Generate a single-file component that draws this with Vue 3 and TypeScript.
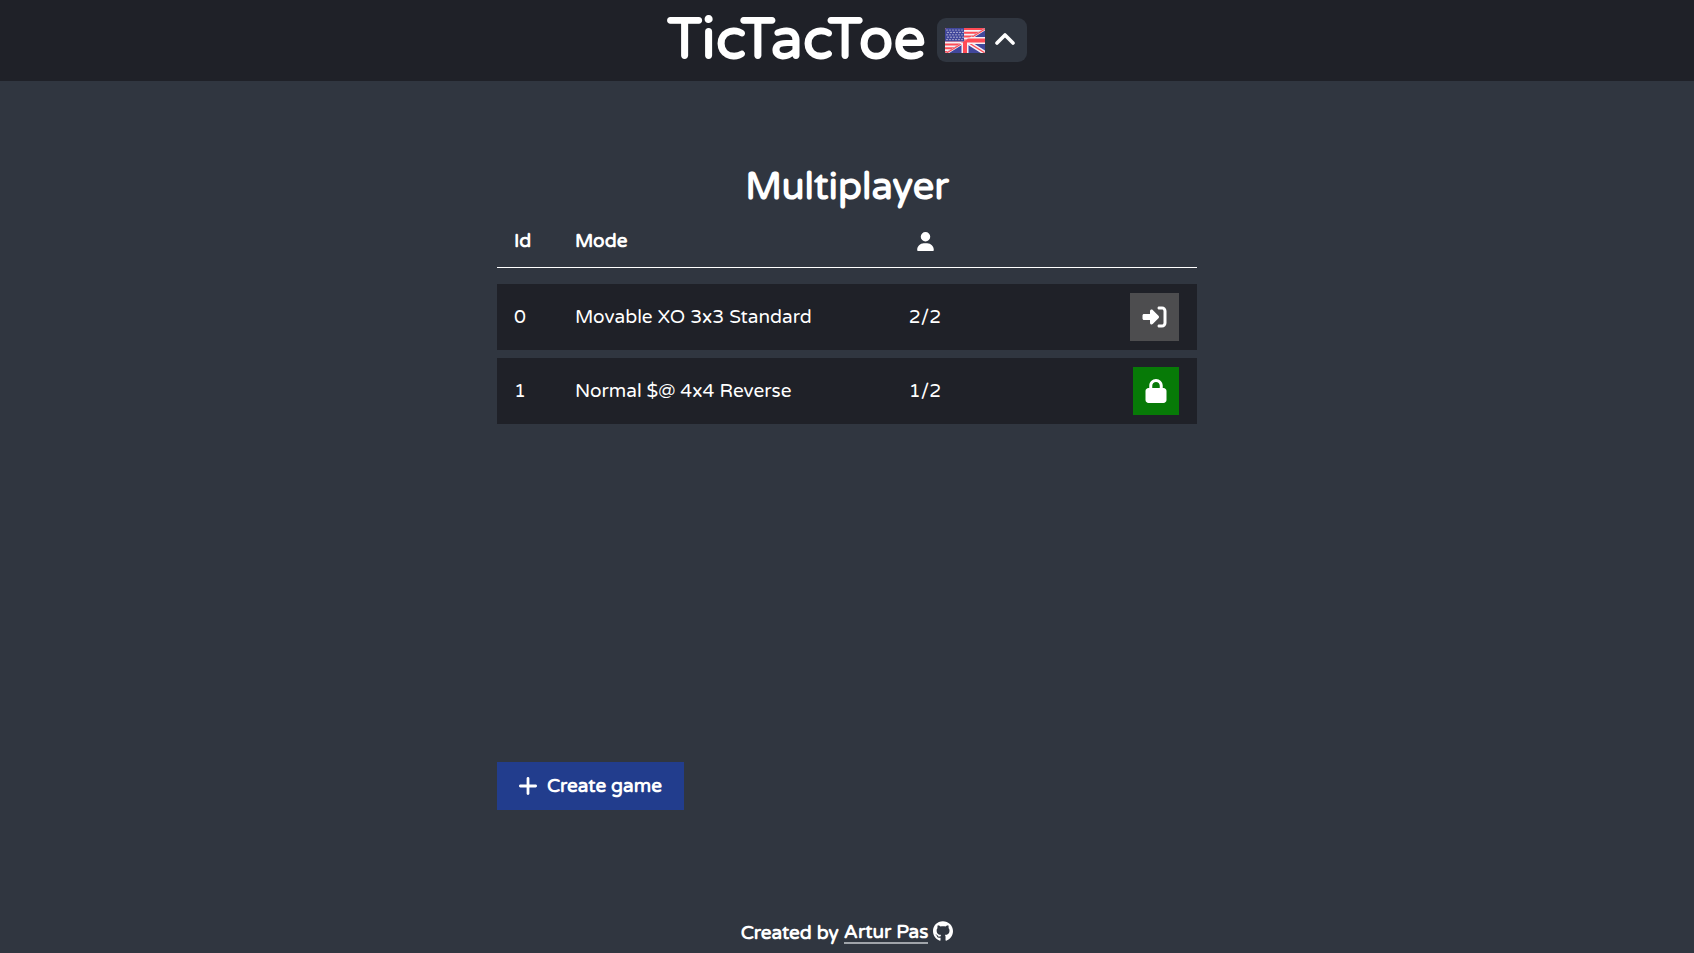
<script setup lang="ts">
import { ref } from 'vue'

interface Game {
  id: number
  mode: string
  players: number
  capacity: number
  locked: boolean
}

const games = ref<Game[]>([
  { id: 0, mode: 'Movable XO 3x3 Standard', players: 2, capacity: 2, locked: false },
  { id: 1, mode: 'Normal $@ 4x4 Reverse', players: 1, capacity: 2, locked: true },
])

const stars: { x: number; y: number }[] = []
for (let row = 0; row < 5; row++) {
  for (let col = 0; col < 6; col++) {
    stars.push({ x: 2 + col * 3 + (row % 2), y: 2 + row * 2.4 })
  }
}
</script>

<template>
  <div class="page">
    <header class="topbar">
      <h1 class="title">TicTacToe</h1>
      <button class="language" type="button" aria-label="Change language">
        <svg class="flag" viewBox="0 0 40 25" aria-hidden="true">
          <defs>
            <clipPath id="flag-shape"><rect width="40" height="25" rx="1.5" /></clipPath>
            <clipPath id="flag-lower"><path d="M40 0V25H0z" /></clipPath>
          </defs>
          <g clip-path="url(#flag-shape)">
            <rect width="40" height="25" fill="#f5f0f5" />
            <path
              d="M0 1H40M0 4.8H40M0 8.6H40M0 12.5H40M0 16.4H40M0 20.2H40M0 24H40"
              stroke="#ff4b55"
              stroke-width="2"
            />
            <g clip-path="url(#flag-lower)">
              <rect width="40" height="25" fill="#41479b" />
              <path d="M0 0L40 25M40 0L0 25" stroke="#f5f0f5" stroke-width="4.4" />
              <path d="M20 12.5L40 25M40 1L0 26" stroke="#ff4b55" stroke-width="1.3" />
              <path d="M20 0V25M0 12.5H40" stroke="#f5f0f5" stroke-width="7" />
              <path d="M20 0V25M0 12.5H40" stroke="#ff4b55" stroke-width="4" />
            </g>
            <rect width="19" height="13.4" fill="#41479b" />
            <circle v-for="(s, i) in stars" :key="i" :cx="s.x" :cy="s.y" r="0.6" fill="#f5f0f5" />
          </g>
        </svg>
        <svg class="chevron" viewBox="0 0 20 13" aria-hidden="true">
          <path
            d="M2 11L10 3L18 11"
            fill="none"
            stroke="currentColor"
            stroke-width="3.6"
            stroke-linecap="round"
            stroke-linejoin="round"
          />
        </svg>
      </button>
    </header>

    <main class="lobby">
      <h2 class="heading">Multiplayer</h2>
      <div class="list">
        <table class="games">
          <thead>
            <tr>
              <th class="col-id" scope="col">Id</th>
              <th class="col-mode" scope="col">Mode</th>
              <th class="col-players" scope="col" aria-label="Players">
                <svg class="icon-user" viewBox="0 0 448 512" aria-hidden="true">
                  <path
                    d="M224 256A128 128 0 1 0 224 0a128 128 0 1 0 0 256zm-45.7 48C79.8 304 0 383.8 0 482.3C0 498.7 13.3 512 29.7 512l388.6 0c16.4 0 29.7-13.3 29.7-29.7C448 383.8 368.2 304 269.7 304l-91.4 0z"
                  />
                </svg>
              </th>
              <td class="col-action"></td>
            </tr>
          </thead>
          <tbody>
            <tr v-for="game in games" :key="game.id">
              <td class="col-id">{{ game.id }}</td>
              <td class="col-mode">{{ game.mode }}</td>
              <td class="col-players">{{ game.players }}/{{ game.capacity }}</td>
              <td class="col-action">
                <button v-if="game.locked" class="join open" type="button" aria-label="Join private game">
                  <svg class="icon-lock" viewBox="0 0 448 512" aria-hidden="true">
                    <path
                      d="M144 144l0 48 160 0 0-48c0-44.2-35.8-80-80-80s-80 35.8-80 80zM80 192l0-48C80 64.5 144.5 0 224 0s144 64.5 144 144l0 48 16 0c35.3 0 64 28.7 64 64l0 192c0 35.3-28.7 64-64 64L64 512c-35.3 0-64-28.7-64-64L0 256c0-35.3 28.7-64 64-64l16 0z"
                    />
                  </svg>
                </button>
                <button v-else class="join full" type="button" aria-label="Join game">
                  <svg class="icon-enter" viewBox="0 0 512 512" aria-hidden="true">
                    <path
                      d="M217.9 105.9L340.7 228.7c7.2 7.2 11.3 17.1 11.3 27.3s-4.1 20.1-11.3 27.3L217.9 406.1c-6.4 6.4-15 9.9-24 9.9c-18.7 0-33.9-15.2-33.9-33.9l0-62.1L32 320c-17.7 0-32-14.3-32-32l0-64c0-17.7 14.3-32 32-32l128 0 0-62.1c0-18.7 15.2-33.9 33.9-33.9c9 0 17.6 3.6 24 9.9zM352 416l64 0c17.7 0 32-14.3 32-32l0-256c0-17.7-14.3-32-32-32l-64 0c-17.7 0-32-14.3-32-32s14.3-32 32-32l64 0c53 0 96 43 96 96l0 256c0 53-43 96-96 96l-64 0c-17.7 0-32-14.3-32-32s14.3-32 32-32z"
                    />
                  </svg>
                </button>
              </td>
            </tr>
          </tbody>
        </table>
      </div>
      <button class="create" type="button">
        <svg class="icon-plus" viewBox="16 48 416 416" aria-hidden="true">
          <path
            d="M256 80c0-17.7-14.3-32-32-32s-32 14.3-32 32l0 144L48 224c-17.7 0-32 14.3-32 32s14.3 32 32 32l144 0 0 144c0 17.7 14.3 32 32 32s32-14.3 32-32l0-144 144 0c17.7 0 32-14.3 32-32s-14.3-32-32-32l-144 0 0-144z"
          />
        </svg>
        <span>Create game</span>
      </button>
    </main>

    <footer class="credits">
      <span>Created by</span>
      <a class="author" href="#">Artur Pas</a>
      <svg class="icon-github" viewBox="0 8 496 486" aria-hidden="true">
        <path
          d="M165.9 397.4c0 2-2.3 3.6-5.2 3.6-3.3.3-5.6-1.3-5.6-3.6 0-2 2.3-3.6 5.2-3.6 3-.3 5.6 1.3 5.6 3.6zm-31.1-4.5c-.7 2 1.3 4.3 4.3 4.9 2.6 1 5.6 0 6.2-2s-1.3-4.3-4.3-5.2c-2.6-.7-5.5.3-6.2 2.3zm44.2-1.7c-2.9.7-4.9 2.6-4.6 4.9.3 2 2.9 3.3 5.9 2.6 2.9-.7 4.9-2.6 4.6-4.6-.3-1.9-3-3.2-5.9-2.9zM244.8 8C106.1 8 0 113.3 0 252c0 110.9 69.8 205.8 169.5 239.2 12.8 2.3 17.3-5.6 17.3-12.1 0-6.2-.3-40.4-.3-61.4 0 0-70 15-84.7-29.8 0 0-11.4-29.1-27.8-36.6 0 0-22.9-15.7 1.6-15.4 0 0 24.9 2 38.6 25.8 21.9 38.6 58.6 27.5 72.9 20.9 2.3-16 8.8-27.1 16-33.7-55.9-6.2-112.3-14.3-112.3-110.5 0-27.5 7.6-41.3 23.6-58.9-2.6-6.5-11.1-33.3 2.6-67.9 20.9-6.5 69 27 69 27 20-5.6 41.5-8.5 62.8-8.5s42.8 2.9 62.8 8.5c0 0 48.1-33.6 69-27 13.7 34.7 5.2 61.4 2.6 67.9 16 17.7 25.8 31.5 25.8 58.9 0 96.5-58.9 104.2-114.8 110.5 9.2 7.9 17 22.9 17 46.4 0 33.7-.3 75.4-.3 83.6 0 6.5 4.6 14.4 17.3 12.1C428.2 457.8 496 362.9 496 252 496 113.3 383.5 8 244.8 8z"
        />
      </svg>
    </footer>
  </div>
</template>

<style>
body {
  margin: 0;
  background: #303640;
}
</style>

<style scoped>
.page {
  display: flex;
  flex-direction: column;
  min-height: 100vh;
  background: #303640;
  color: #fff;
  font-family: 'Varela Round', Inter, 'Open Sans', sans-serif;
  font-size: 19px;
  line-height: 24px;
}

svg {
  display: block;
  fill: currentColor;
}

button {
  border: 0;
  color: inherit;
  font: inherit;
  cursor: pointer;
}

.topbar {
  display: flex;
  align-items: center;
  justify-content: center;
  gap: 11px;
  padding: 8px 16px 9px;
  background: #1f2128;
}

.title {
  margin: 0;
  font-size: 57px;
  font-weight: 700;
  line-height: 64px;
}

.language {
  display: flex;
  align-items: center;
  gap: 10px;
  padding: 8px 12px 8px 8px;
  height: 44px;
  border-radius: 9px;
  background: #303640;
}

.flag {
  width: 40px;
  height: 25px;
}

.chevron {
  width: 20px;
  height: 13px;
  margin-bottom: 4px;
}

.lobby {
  display: flex;
  flex: 1;
  flex-direction: column;
  box-sizing: border-box;
  width: 100%;
  max-width: 700px;
  margin: 0 auto;
  padding: 86px 0 103px;
}

.heading {
  margin: 0;
  font-size: 38px;
  font-weight: 700;
  line-height: 40px;
  text-align: center;
}

.list {
  flex: 1;
}

.games {
  width: 100%;
  border-spacing: 0 8px;
  table-layout: fixed;
}

.games thead::after {
  content: '';
  display: table-row;
}

.games th,
.games td {
  padding: 0;
  text-align: left;
}

.games thead th,
.games thead td {
  height: 52px;
  border-bottom: 1px solid #fff;
  font-weight: 700;
}

.games tbody td {
  height: 66px;
  background: #1f2128;
}

.games .col-id {
  width: 61px;
  padding-left: 17px;
}

.games .col-mode {
  width: 312px;
}

.games .col-players {
  width: 76px;
  text-align: center;
}

.games .col-action {
  padding-right: 18px;
}

.icon-user {
  width: 17px;
  height: 19px;
  margin: 0 auto;
}

.join {
  display: block;
  margin-left: auto;
  padding: 12px;
}

.join.full {
  background: #4d4d4f;
}

.join.open {
  background: #077a07;
}

.icon-enter {
  width: 25px;
  height: 24px;
}

.icon-lock {
  width: 22px;
  height: 24px;
}

.create {
  display: flex;
  align-items: center;
  align-self: flex-start;
  gap: 10px;
  padding: 12px 22px;
  background: #223d8d;
  font-weight: 700;
}

.icon-plus {
  width: 18px;
  height: 18px;
}

.credits {
  display: flex;
  align-items: center;
  justify-content: center;
  gap: 5px;
  padding: 8px 16px;
  font-weight: 700;
}

.author {
  border-bottom: 2px solid #a0a4aa;
  color: inherit;
  line-height: 20px;
  text-decoration: none;
}

.icon-github {
  width: 20px;
  height: 20px;
  margin-bottom: 4px;
}
</style>
